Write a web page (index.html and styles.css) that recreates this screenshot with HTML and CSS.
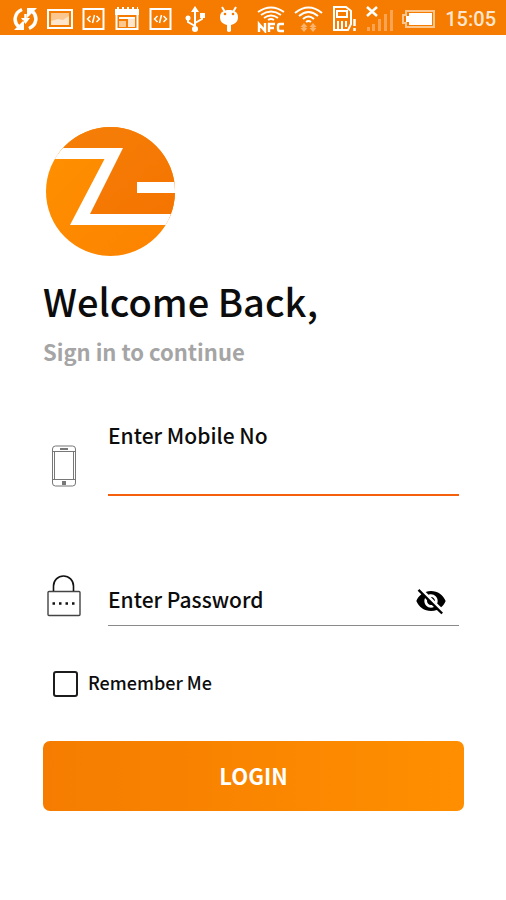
FILE: index.html
```html
<!DOCTYPE html>
<html lang="en">
    <head>
        <meta charset="utf-8">
        <meta name="viewport" content="width=device-width, initial-scale=1">
        <title>Login</title>
        <link rel="stylesheet" href="styles.css">
    </head>
    <body>
        <header class="statusbar">
            <!-- sync -->
            <svg width="25" height="28" viewBox="0 0 25 28" fill="none" stroke="#fff" stroke-width="3.500">
                <path d="M9 4.500C1 8 0 17 6 22M16 23.500c8-3.500 9-12.500 3-17.500"/>
                <path d="M1 25h10V15zM24 3H14v10zM8 13h9l-4.500 6z" fill="#fff" stroke="none"/>
                <path d="M12.500 9v5" stroke-width="2.500"/>
            </svg>
            <!-- picture -->
            <svg width="26" height="28" viewBox="0 0 26 28">
                <path d="M1 5h24v18H1z" fill="none" stroke="#fff" stroke-width="2"/>
                <path d="M4 8h18v12H4z" fill="#fbc78f"/>
                <path d="M4 16l7-2 5 1 6-4v9H4z" fill="#fde6cd"/>
            </svg>
            <svg width="23" height="28" viewBox="0 0 23 28" fill="none" stroke="#fff">
                <path d="M1.500 4h20v20h-20z" stroke-width="2"/>
                <path d="M8.500 11l-3 3 3 3M14.500 11l3 3-3 3M12.500 10l-2 8" stroke-width="1.500"/>
            </svg>
            <!-- calendar -->
            <svg width="26" height="28" viewBox="0 0 26 28">
                <path d="M1 4h2V2h2v2h3V2h2v2h3V2h2v2h3V2h2v2h3V2h1v2h1v6H1z" fill="#fff"/>
                <path d="M2.500 9v15h21V9" fill="none" stroke="#fff" stroke-width="2"/>
                <path d="M5 12h16v2H5z" fill="#fff"/>
                <path d="M5 16h7v6H5z" fill="#fbc78f"/>
                <path d="M14 14h7v8h-7z" fill="#fde6cd"/>
            </svg>
            <svg width="23" height="28" viewBox="0 0 23 28" fill="none" stroke="#fff">
                <path d="M1.500 4h20v20h-20z" stroke-width="2"/>
                <path d="M8.500 11l-3 3 3 3M14.500 11l3 3-3 3M12.500 10l-2 8" stroke-width="1.500"/>
            </svg>
            <!-- usb -->
            <svg width="28" height="28" viewBox="0 0 28 28" fill="none" stroke="#fff" stroke-width="2">
                <path d="M14 5v18M14 21l-7-4v-4M14 18l7-4v-4"/>
                <path d="M14 1l4 6h-8zM19 8h5v5h-5z" fill="#fff" stroke="none"/>
                <circle cx="7" cy="13" r="2.500" fill="#fff" stroke="none"/>
                <circle cx="14" cy="24" r="3" fill="#fff" stroke="none"/>
            </svg>
            <!-- android -->
            <svg width="30" height="28" viewBox="0 0 30 28">
                <path d="M4 2l3 5M18 2l-3 5" stroke="#fff" stroke-width="2"/>
                <path d="M2 12c0-5 4-7 9-7s9 2 9 7c0 5-3 7-7 8v6q-2 2-4 0v-6c-4-1-7-3-7-8z" fill="#fff"/>
                <circle cx="7" cy="9" r="1.300" fill="#f57c00"/>
                <circle cx="15" cy="9" r="1.300" fill="#f57c00"/>
            </svg>
            <!-- nfc -->
            <svg width="28" height="28" viewBox="0 0 28 28" fill="none" stroke="#fff">
                <path d="M1 7q13-9 26 0M4 10q10-7 20 0M7 13q7-5 14 0M11 15q3-2 6 0" stroke-width="1.800"/>
                <path d="M2 27v-8l6 7v-8M12 27v-8h6M12 23h5M27 19h-4q-2 0-2 2v3q0 2 2 2h4" stroke-width="2.400"/>
            </svg>
            <!-- wifi -->
            <svg width="29" height="28" viewBox="0 0 29 28" fill="none" stroke="#fff" stroke-width="2">
                <path d="M1 8q13.500-11 27 0M5 11q9.500-8 19 0M9 14q5.500-5 11 0M12 17q2.500-2 5 0"/>
                <path d="M10 18l3.500 4h-2v1h2L10 27l-3.500-4h2v-1h-2zM19 18l3.500 4h-2v1h2L19 27l-3.500-4h2v-1h-2z" fill="#f9b36c" stroke="none"/>
            </svg>
            <!-- sim -->
            <svg width="25" height="28" viewBox="0 0 25 28" fill="none" stroke="#fff" stroke-width="2">
                <path d="M2 2h12l5 4v13l-3 6H2z"/>
                <path d="M5 6h10v6H5zM6 16v8M10 16v8M14 16v6"/>
                <path d="M22.500 14v7M22.500 23v3" stroke-width="2.500"/>
            </svg>
            <!-- signal -->
            <svg width="27" height="28" viewBox="0 0 27 28">
                <path d="M1 22h3v4H1zM6 19h3v7H6zM12 14h3v12h-3zM18 9h3v17h-3zM24 5h3v21h-3z" fill="#f9a452"/>
                <path d="M1 2l10 9M11 2L1 11" stroke="#fff" stroke-width="2.500"/>
            </svg>
            <!-- battery -->
            <svg width="34" height="28" viewBox="0 0 34 28">
                <path d="M4 6h28v16H4v-4H1v-8h3z" fill="none" stroke="#fbc78f" stroke-width="2"/>
                <path d="M7 8h23v12H7v-3H4v-6h3z" fill="#fff"/>
            </svg>
            <time>15:05</time>
        </header>

        <main>
            <svg class="logo" viewBox="0 0 129 129" role="img" aria-label="Z logo">
                <defs>
                    <linearGradient id="light" x1="0" y1="0" x2="1" y2="1">
                        <stop offset="0" stop-color="#ff9100"/>
                        <stop offset="1" stop-color="#fc8200"/>
                    </linearGradient>
                    <linearGradient id="dark" x1="0" y1="0" x2="1" y2="1">
                        <stop offset="0" stop-color="#f58009"/>
                        <stop offset="1" stop-color="#f57400"/>
                    </linearGradient>
                    <clipPath id="round"><circle cx="64.500" cy="64.500" r="64.500"/></clipPath>
                </defs>
                <g clip-path="url(#round)">
                    <path d="M0 0h129v129H0z" fill="url(#light)"/>
                    <path d="M0 0h129v92H34L68 27H0z" fill="url(#dark)"/>
                    <path d="M0 21h77L44 87h85v11H24L58.500 32H0z" fill="#fff"/>
                    <path d="M91 55h38v11H91z" fill="#fff"/>
                </g>
            </svg>
            <h1>Welcome Back,</h1>
            <p class="subtitle">Sign in to continue</p>

            <form>
                <div class="field">
                    <svg class="icon" viewBox="0 0 42 42" fill="none" stroke="#777">
                        <rect x="9.500" y="1" width="23" height="40" rx="3"/>
                        <path d="M10 6.500h22M10 34.500h22M11.500 7v27M30.500 7v27"/>
                        <path d="M17 4h8" stroke-width="2"/>
                        <rect x="19.500" y="36.500" width="3" height="3" fill="#777"/>
                    </svg>
                    <div class="entry">
                        <label for="mobile">Enter Mobile No</label>
                        <input class="mobile" id="mobile" type="tel">
                    </div>
                </div>

                <div class="field">
                    <svg class="icon" viewBox="0 0 42 42" fill="none" stroke="#111">
                        <rect x="5" y="16.500" width="32" height="24" rx="1" stroke="#444" stroke-width="1.400"/>
                        <path d="M10.500 16v-5a10 10 0 0 1 20 0v5" stroke-width="1.600"/>
                        <path d="M9.500 28.500h2.500M16 28.500h2.500M22.500 28.500h2.500M29 28.500h2.500" stroke-width="2.500"/>
                    </svg>
                    <div class="entry password">
                        <input type="password" placeholder="Enter Password" aria-label="Enter Password">
                        <button class="toggle" type="button" aria-label="Show password">
                            <svg width="32" height="32" viewBox="0 0 24 24">
                                <path d="M12 7c2.760 0 5 2.240 5 5 0 .65-.13 1.260-.36 1.830l2.920 2.920c1.510-1.260 2.700-2.890 3.430-4.750-1.730-4.390-6-7.500-11-7.500-1.400 0-2.740.25-3.980.7l2.160 2.160C10.740 7.130 11.350 7 12 7zM2 4.270l2.280 2.280.46.46C3.080 8.300 1.780 10.020 1 12c1.730 4.390 6 7.500 11 7.500 1.550 0 3.030-.3 4.380-.84l.42.42L19.730 22 21 20.730 3.270 3 2 4.270zM7.530 9.800l1.550 1.550c-.05.21-.08.43-.08.65 0 1.660 1.340 3 3 3 .22 0 .44-.03.65-.08l1.550 1.550c-.67.33-1.410.53-2.200.53-2.760 0-5-2.240-5-5 0-.79.2-1.530.53-2.200zm4.310-.78l3.150 3.150.02-.16c0-1.660-1.340-3-3-3l-.17.01z"/>
                            </svg>
                        </button>
                    </div>
                </div>

                <div class="remember">
                    <input id="remember" type="checkbox">
                    <label for="remember">Remember Me</label>
                </div>
                <button class="login" type="submit">LOGIN</button>
            </form>
        </main>
    </body>
</html>
```

FILE: styles.css
```css
*{
    box-sizing: border-box;
}
body{
    margin: 0;
    background-color: #fff;
    color: #0c0c0c;
    font-family: "Noto Sans CJK SC", "Noto Sans", sans-serif;
    font-weight: 500;
}
.statusbar{
    display: flex;
    align-items: center;
    gap: 9px;
    height: 35px;
    padding: 2px 10px 0 13px;
    background-color: #f57c00;
}
.statusbar svg{
    flex: none;
}
.statusbar time{
    margin-left: auto;
    color: #fde6cd;
    font-family: Roboto, sans-serif;
    font-size: 20px;
    font-weight: 500;
}
main{
    padding: 92px 42px 40px 43px;
}
.logo{
    display: block;
    width: 129px;
    height: 129px;
    margin-left: 3px;
}
h1{
    margin: 25px 0 18px;
    font-size: 38px;
    font-weight: 500;
    line-height: 40px;
}
.subtitle{
    margin: 0 0 62px;
    color: #a5a5a5;
    font-size: 22px;
    font-weight: 700;
    line-height: 24px;
}
.field{
    display: flex;
    align-items: flex-end;
    gap: 23px;
    margin-bottom: 79px;
    padding-right: 5px;
}
.icon{
    flex: none;
    width: 42px;
    height: 42px;
    margin-bottom: 9px;
}
.entry{
    flex: 1;
    min-width: 0;
}
.entry label{
    display: block;
    font-size: 21px;
    line-height: 20px;
}
input, button{
    margin: 0;
    padding: 0;
    border: 0;
    border-radius: 0;
    background: none;
    color: inherit;
    font: inherit;
    outline: none;
}
.mobile{
    display: block;
    width: 100%;
    height: 51px;
    border-bottom: 2px solid #f4600c;
    font-size: 21px;
}
.password{
    display: flex;
    align-items: center;
    height: 50px;
    border-bottom: 1px solid #8a8a8a;
}
.password input{
    flex: 1;
    min-width: 0;
    padding-bottom: 4px;
    font-size: 21px;
}
.password input::placeholder{
    color: #0c0c0c;
    opacity: 1;
}
.toggle{
    display: flex;
    margin-right: 12px;
    cursor: pointer;
}
.remember{
    display: flex;
    align-items: flex-start;
    gap: 10px;
    margin: -34px 0 44px;
    padding-left: 10px;
    font-size: 18px;
    line-height: 22px;
}
.remember input{
    appearance: none;
    width: 25px;
    height: 26px;
    border: 2px solid #1c1c1c;
    border-radius: 3px;
}
.remember input:checked{
    background-color: #f57c00;
}
.login{
    display: block;
    width: 100%;
    height: 70px;
    padding-bottom: 2px;
    border-radius: 7px;
    background-image: linear-gradient(to right, #f57c00, #ff8f00);
    color: #fff;
    font-size: 22px;
    font-weight: 700;
    cursor: pointer;
}
```
